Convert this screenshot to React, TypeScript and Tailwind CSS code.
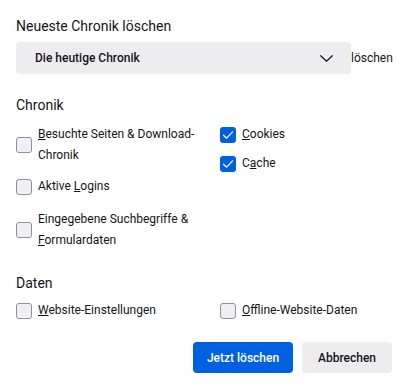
import React from "react";

const font = { fontFamily: 'Roboto, "Noto Sans", sans-serif' };

function Box({ checked }: { checked?: boolean }) {
  if (checked) {
    return (
      <span className="flex h-4 w-4 shrink-0 items-center justify-center rounded-[3px] bg-[#0061e0]">
        <svg width="12" height="12" viewBox="0 0 12 12" fill="none">
          <path d="M1.5 6.2 L4.6 9.2 L10.6 2.8" stroke="white" strokeWidth="1.2" strokeLinecap="round" strokeLinejoin="round" />
        </svg>
      </span>
    );
  }
  return <span className="block h-4 w-4 shrink-0 rounded-[3px] border border-[#8f8f9d] bg-[#f0f0f4]" />;
}

function Check({ checked, children, className = "" }: { checked?: boolean; children: React.ReactNode; className?: string }) {
  return (
    <div className={"flex items-center gap-[6px] " + className}>
      <Box checked={checked} />
      <span className="text-[12px] leading-[21px] text-[#15141a]">{children}</span>
    </div>
  );
}

export default function App() {
  return (
    <div className="h-[388px] w-[406px] overflow-hidden bg-white text-[#15141a]" style={font}>
      <div className="px-4 pt-4">
        <h1 className="text-[14px] leading-5">Neueste Chronik löschen</h1>
        <div className="mt-[6px] flex items-center">
          <div className="flex h-8 w-[335px] shrink-0 items-center justify-between rounded-[4px] bg-[#ededf0] pl-[19px] pr-[18px]">
            <span className="text-[12px] font-medium">Die heutige Chronik</span>
            <svg width="13" height="7" viewBox="0 0 13 7" fill="none">
              <path d="M0.7 0.7 L6.5 6.2 L12.3 0.7" stroke="#15141a" strokeWidth="1.2" strokeLinecap="round" strokeLinejoin="round" />
            </svg>
          </div>
          <span className="whitespace-nowrap text-[12px]">löschen</span>
        </div>

        <h2 className="mt-[21px] text-[14px] leading-5">Chronik</h2>
        <div className="mt-[9px] grid grid-cols-[204px_1fr]">
          <div className="flex flex-col">
            <Check><span className="underline">B</span>esuchte Seiten &amp; Download-<br />Chronik</Check>
            <Check className="mt-[10px]">Aktive <span className="underline">L</span>ogins</Check>
            <Check className="mt-[12px]">Eingegebene Suchbegriffe &amp;<br /><span className="underline">F</span>ormulardaten</Check>
          </div>
          <div className="flex flex-col">
            <Check checked><span className="underline">C</span>ookies</Check>
            <Check checked className="mt-[8px]">C<span className="underline">a</span>che</Check>
          </div>
        </div>

        <h2 className="mt-[22px] text-[14px] leading-5">Daten</h2>
        <div className="mt-[7px] grid grid-cols-[204px_1fr]">
          <Check><span className="underline">W</span>ebsite-Einstellungen</Check>
          <Check><span className="underline">O</span>ffline-Website-Daten</Check>
        </div>

        <div className="-mr-[2px] mt-[21px] flex justify-end gap-[9px]">
          <button className="h-[31px] w-[100px] rounded-[4px] bg-[#0061e0] text-[12px] font-medium text-white">Jetzt löschen</button>
          <button className="h-[31px] w-[90px] rounded-[4px] bg-[#ededf0] text-[12px] font-medium text-[#15141a]">Abbrechen</button>
        </div>
      </div>
    </div>
  );
}
